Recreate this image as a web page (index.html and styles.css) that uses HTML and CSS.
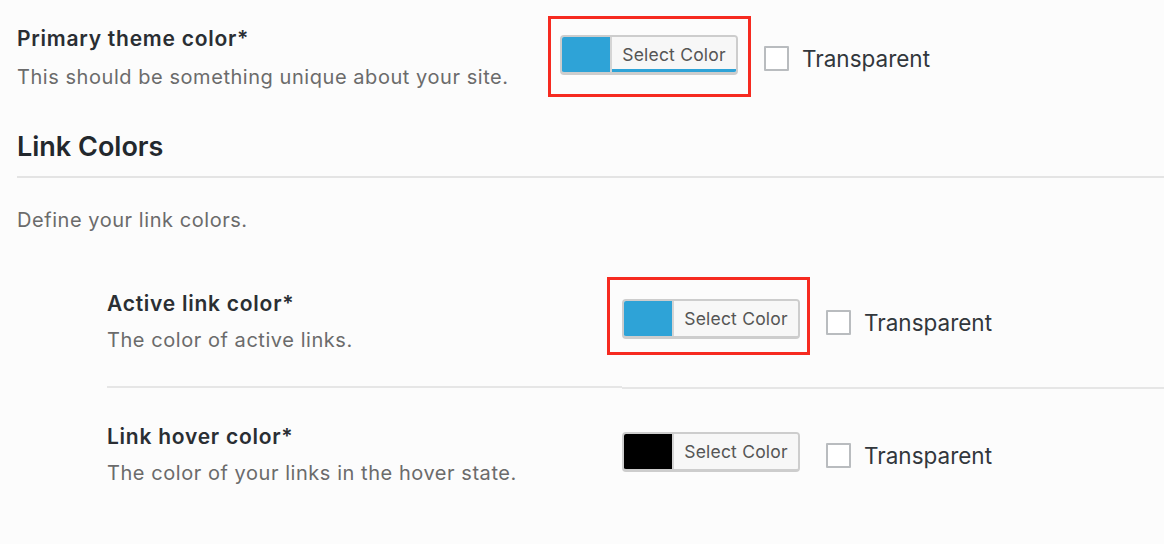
FILE: index.html
```html
<!DOCTYPE html>
<html lang="en">
<head>
<meta charset="utf-8">
<title>Color settings</title>
<link rel="stylesheet" href="styles.css">
</head>
<body>
<main class="page">
  <div class="field-row">
    <div class="field-label">
      <div class="field-title">Primary theme color*</div>
      <div class="field-desc">This should be something unique about your site.</div>
    </div>
    <div class="field-control">
      <span class="annot annot-1">
        <span class="picker picker-focus">
          <span class="swatch swatch-blue"></span>
          <span class="picker-text">Select Color</span>
        </span>
      </span>
      <label class="transparent"><span class="checkbox"></span><span class="transparent-text">Transparent</span></label>
    </div>
  </div>

  <h2 class="section-title">Link Colors</h2>
  <p class="section-desc">Define your link colors.</p>

  <div class="sub-fields">
    <div class="sub-label sub-label-first">
      <div class="field-title">Active link color*</div>
      <div class="field-desc sub-desc">The color of active links.</div>
    </div>
    <div class="sub-control sub-control-first">
      <span class="annot annot-2">
        <span class="picker">
          <span class="swatch swatch-blue"></span>
          <span class="picker-text">Select Color</span>
        </span>
      </span>
      <label class="transparent"><span class="checkbox"></span><span class="transparent-text">Transparent</span></label>
    </div>

    <div class="sub-label sub-label-last">
      <div class="field-title">Link hover color*</div>
      <div class="field-desc sub-desc">The color of your links in the hover state.</div>
    </div>
    <div class="sub-control sub-control-last">
      <span class="picker">
        <span class="swatch swatch-black"></span>
        <span class="picker-text">Select Color</span>
      </span>
      <label class="transparent"><span class="checkbox"></span><span class="transparent-text">Transparent</span></label>
    </div>
  </div>
</main>
</body>
</html>
```

FILE: styles.css
```css
html, body {
  margin: 0;
  padding: 0;
  background: #fcfcfc;
}

body {
  font-family: Inter, "Open Sans", "Liberation Sans", sans-serif;
  color: #23282d;
}

.page {
  padding: 25px 0 0 17px;
}

.field-row {
  display: flex;
  align-items: flex-start;
}

.field-label {
  width: 543px;
  flex: none;
}

.field-title {
  font-size: 21px;
  font-weight: 600;
  letter-spacing: 0.75px;
  line-height: 28px;
  color: #2a2e33;
}

.field-desc {
  font-size: 20px;
  letter-spacing: 0.55px;
  line-height: 28px;
  color: #6b6b6b;
  margin-top: 10px;
}

.field-control {
  display: flex;
  align-items: center;
  margin-top: 10px;
}

.annot {
  position: relative;
  display: inline-flex;
}

.annot::after {
  content: "";
  position: absolute;
  border: 3px solid #f62a20;
  pointer-events: none;
}

.annot-1::after {
  left: -12px;
  right: -13px;
  top: -19px;
  bottom: -22px;
}

.annot-2::after {
  left: -15px;
  right: -10px;
  top: -22px;
  bottom: -16px;
}

.picker {
  display: inline-flex;
  width: 178px;
  height: 40px;
  box-sizing: border-box;
  border: 2px solid #cdcdcd;
  border-bottom-width: 3px;
  border-radius: 4px;
  overflow: hidden;
  background: #f7f7f7;
}

.swatch {
  width: 48px;
  flex: none;
}

.swatch-blue {
  background: #2ea3d7;
}

.swatch-black {
  background: #000;
}

.picker-text {
  flex: 1;
  display: flex;
  align-items: center;
  justify-content: center;
  border-left: 2px solid #d4d4d4;
  font-size: 17.5px;
  letter-spacing: 0.2px;
  color: #555;
  background: #f7f7f7;
  padding-bottom: 1px;
}

.picker-focus .picker-text {
  box-shadow: inset 0 -3px 0 #2ea3d7;
}

.transparent {
  display: flex;
  align-items: center;
  margin-left: 26px;
  margin-top: 6px;
}

.checkbox {
  width: 25px;
  height: 25px;
  box-sizing: border-box;
  border: 2px solid #b9bcbf;
  background: #fff;
  border-radius: 1px;
}

.transparent-text {
  margin-left: 13px;
  font-size: 22.5px;
  color: #32373c;
}

.section-title {
  margin: 39px 0 0;
  font-size: 27px;
  font-weight: 600;
  line-height: 34px;
  color: #23282d;
  padding-bottom: 12px;
  border-bottom: 2px solid #e4e4e4;
}

.section-desc {
  margin: 28px 0 0;
  font-size: 20px;
  letter-spacing: 0.55px;
  line-height: 28px;
  color: #6b6b6b;
}

.sub-fields {
  display: grid;
  grid-template-columns: 515px 1fr;
  margin-left: 90px;
  margin-top: 56px;
  align-items: start;
}

.sub-desc {
  margin-top: 8px;
}

.sub-label-first {
  padding-bottom: 32px;
  border-bottom: 2px solid #e6e6e6;
}

.sub-control {
  display: flex;
  align-items: center;
}

.sub-control-first {
  padding-top: 9px;
  padding-bottom: 48px;
  border-bottom: 2px solid #e6e6e6;
}

.sub-label-last {
  padding-top: 34px;
}

.sub-control-last {
  padding-top: 43px;
}
```
